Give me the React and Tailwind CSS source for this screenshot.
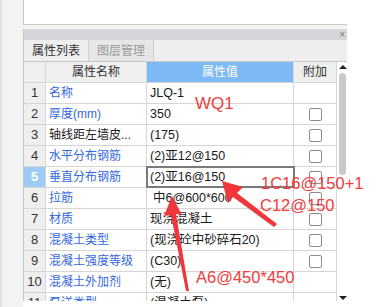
import React from 'react';

const rows = [
    { n: 1, name: '名称', value: 'JLQ-1', blue: true, box: false },
    { n: 2, name: '厚度(mm)', value: '350', blue: true, box: true },
    { n: 3, name: '轴线距左墙皮...', value: '(175)', blue: false, box: true },
    { n: 4, name: '水平分布钢筋', value: '(2)亚12@150', blue: true, box: true },
    { n: 5, name: '垂直分布钢筋', value: '(2)亚16@150', blue: true, box: true, active: true },
    { n: 6, name: '拉筋', value: '中6@600*600', blue: true, box: true, indent: true },
    { n: 7, name: '材质', value: '现浇混凝土', blue: true, box: true },
    { n: 8, name: '混凝土类型', value: '(现浇砼中砂碎石20)', blue: true, box: true },
    { n: 9, name: '混凝土强度等级', value: '(C30)', blue: true, box: true },
    { n: 10, name: '混凝土外加剂', value: '(无)', blue: true, box: false },
    { n: 11, name: '泵送类型', value: '(混凝土泵)', blue: true, box: false },
];

const font = { fontFamily: '"Liberation Sans", "Noto Sans CJK SC", sans-serif' };

const Row = ({ row }) => (
    <div className="flex h-[21px] shrink-0 border-b border-[#d6d6d6]">
        <div className={`w-[22px] shrink-0 flex items-center justify-center border-r border-[#d6d6d6] text-[13px] ${row.active ? 'bg-[#9ccbf6] text-white font-bold' : 'bg-[#efefef] text-[#333]'}`}>
            {row.n}
        </div>
        <div className={`w-[101px] shrink-0 flex items-center pl-[3px] border-r border-[#d6d6d6] text-[12px] whitespace-nowrap overflow-hidden ${row.blue ? 'text-[#3468de]' : 'text-[#222]'}`}>
            {row.name}
        </div>
        <div className={`w-[147px] shrink-0 flex items-center border-r border-[#d6d6d6] text-[12.5px] text-[#1a1a1a] whitespace-nowrap ${row.indent ? 'pl-[6px]' : 'pl-[3px]'} ${row.active ? 'outline-2 outline-[#7a7a7a] -outline-offset-1' : ''}`}>
            {row.value}
        </div>
        <div className="w-[42px] shrink-0 flex items-center justify-center">
            {row.box && <div className="w-[13px] h-[13px] rounded-[2px] border border-[#8c8c8c] bg-white"></div>}
        </div>
    </div>
);

const App = () => {
    return (
        <div className="relative w-[378px] h-[307px] overflow-hidden bg-white flex items-start" style={font}>
            {/* left strip */}
            <div className="w-[23px] h-[307px] shrink-0 bg-[#f3f3f3] border-l-2 border-[#e2e2e2]"></div>

            <div className="w-[324px] h-[301px] shrink-0 flex flex-col bg-[#f3f3f3]">
                <div className="h-[25px] shrink-0 bg-white border-l border-b border-[#c8c8c8]"></div>
                <div className="h-[4px] shrink-0"></div>

                <div className="flex-1 flex flex-col border-l border-[#c8c8c8] bg-white overflow-hidden">
                    {/* title bar */}
                    <div className="h-[11px] shrink-0 bg-[#d5d6d9] flex items-center justify-end pr-[2px]">
                        <span className="text-[10px] leading-none text-[#777]">×</span>
                    </div>

                    {/* tabs */}
                    <div className="h-[22px] shrink-0 flex bg-[#eeeeee] border-b border-[#c8c8c8]">
                        <div className="w-[65px] flex items-center justify-center text-[12px] text-[#333] border-r border-[#cfcfcf]">属性列表</div>
                        <div className="w-[65px] flex items-center justify-center text-[12px] text-[#9a9a9a] bg-[#e6e6e6] border-r border-[#cfcfcf]">图层管理</div>
                    </div>

                    {/* table */}
                    <div className="flex-1 flex overflow-hidden">
                        <div className="w-[312px] shrink-0 flex flex-col">
                            <div className="flex h-[21px] shrink-0 border-b border-[#d6d6d6] text-[12px]">
                                <div className="w-[22px] shrink-0 bg-[#efefef] border-r border-[#d6d6d6]"></div>
                                <div className="w-[101px] shrink-0 bg-[#efefef] border-r border-[#d6d6d6] flex items-center justify-center text-[#333]">属性名称</div>
                                <div className="w-[147px] shrink-0 bg-[#7db9f5] border-r border-[#d6d6d6] flex items-center justify-center text-white">属性值</div>
                                <div className="w-[42px] shrink-0 bg-[#efefef] flex items-center justify-center text-[#333]">附加</div>
                            </div>
                            {rows.map(row => <Row key={row.n} row={row} />)}
                        </div>

                        {/* scrollbar */}
                        <div className="w-[12px] shrink-0 flex flex-col items-center border-l border-[#d6d6d6] bg-white">
                            <div className="mt-[3px] w-0 h-0 border-l-[4px] border-r-[4px] border-b-[4px] border-l-transparent border-r-transparent border-b-[#222]"></div>
                            <div className="mt-[4px] w-[7px] h-[102px] rounded-full bg-[#c9c9c9]"></div>
                            <div className="mt-auto mb-[1px] w-0 h-0 border-l-[4px] border-r-[4px] border-t-[4px] border-l-transparent border-r-transparent border-t-[#222]"></div>
                        </div>
                    </div>
                </div>
            </div>

            <div className="flex-1 h-[307px] bg-white"></div>

            {/* red annotations */}
            <div className="absolute left-[195px] top-[95px] text-[17px] leading-none text-[#f03c3c]">WQ1</div>
            <div className="absolute left-[261px] top-[175px] text-[16.5px] leading-none text-[#f03c3c]">1C16@150+1</div>
            <div className="absolute left-[260px] top-[197px] text-[16.5px] leading-none text-[#f03c3c]">C12@150</div>
            <div className="absolute left-[196px] top-[269px] text-[16.5px] leading-none text-[#f03c3c]">A6@450*450</div>

            <svg className="absolute left-0 top-0" width="378" height="307" viewBox="0 0 378 307">
                <polygon points="222,181 243,187 237,193 277,224 274,227 233,197 228,203" fill="#f0363a" />
                <polygon points="172,196 182,215 176,214 189,291 186,291 171,215 164,216" fill="#f0363a" />
            </svg>
        </div>
    );
};

export default App;
